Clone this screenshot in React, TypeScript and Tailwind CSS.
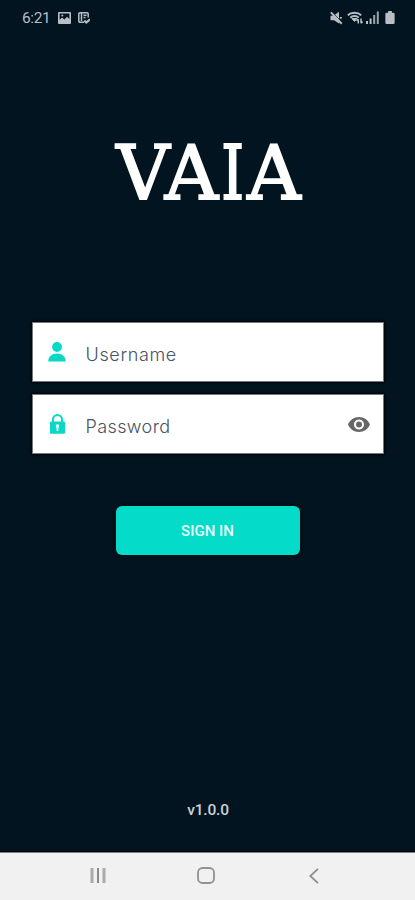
import type { ReactNode } from "react";

interface FieldProps {
    icon: ReactNode,
    label: string,
    className?: string,
    children?: ReactNode
}

function StatusBar() {
    return (
        <div className="flex h-[35px] items-center justify-between pl-[22px] pr-[20px] text-[#b9bec4]">
            {/* Time and notifications */}
            <div className="flex items-center">
                <span className="w-[28px] whitespace-nowrap font-[Roboto] text-[15.5px] leading-[18px] tracking-[-0.4px]">6:21</span>
                <svg className="ml-[8px] h-[12px] w-[13px]" viewBox="0 0 13 12" fill="currentColor">
                    <path fillRule="evenodd" d="M1 0h11a1 1 0 0 1 1 1v10a1 1 0 0 1-1 1H1a1 1 0 0 1-1-1V1a1 1 0 0 1 1-1Zm.6 1.6v6.2l2.5-2.4 2.2 2 2.7-2.7 2.4 2.4V1.6Z" />
                    <circle cx="4.3" cy="3.5" r="1" />
                </svg>
                <svg className="ml-[7px] h-[12px] w-[12px]" viewBox="0 0 12 12" fill="none" stroke="currentColor" strokeWidth="1.5">
                    <path d="M6 10.2H2A1.2 1.2 0 0 1 .8 9V2A1.2 1.2 0 0 1 2 .8h7A1.2 1.2 0 0 1 10.2 2v3.5M3.5 1v8M5.5 3.3h3M5.5 5.5h2" />
                    <path d="m6.3 8.5 2 2L12 7.3" strokeWidth="2.2" />
                </svg>
            </div>

            {/* Sound, network, battery */}
            <div className="flex items-center">
                <svg className="h-[14px] w-[13px]" viewBox="0 0 13 14" fill="currentColor">
                    <path d="M.5 4.8h3L9 .8v11.7l-5-3.3H.5Z" />
                    <path d="M2 1 13 12.4" fill="none" stroke="#01141f" strokeWidth="1" />
                    <path d="M.9 1.4 11.7 12.7" stroke="currentColor" strokeWidth="2" />
                    <path d="M9.8 6h2v1.7h-2z" />
                </svg>
                <svg className="ml-[4px] h-[14px] w-[16px]" viewBox="0 0 16 14" fill="none" stroke="currentColor">
                    <path d="M.8 4.2C4.2.9 10.8.9 14.2 4.2M3.2 6.6c2.4-2.2 6.2-2.2 8.6 0" strokeWidth="1.9" />
                    <path d="m4.8 7.5 2.7 3 2.4-3Z" fill="currentColor" />
                    <path d="M11.3 12.5V8.2m-1.7 1.6 1.7-1.7M14 7.5v4.7m1.5-1.6L14 12.2" strokeWidth="1.5" />
                </svg>
                <svg className="ml-[3px] h-[13px] w-[13px]" viewBox="0 0 13 13" fill="currentColor">
                    <path d="M0 10h2v3H0zM3.6 7.5h2V13h-2z" />
                    <path d="M7.2 4h2v9h-2zM10.8.5h2V13h-2z" opacity=".85" />
                </svg>
                <svg className="ml-[6px] h-[13px] w-[10px]" viewBox="0 0 10 14" fill="currentColor">
                    <path d="M3 0h4v1.8h1.6A1.4 1.4 0 0 1 10 3.2v9.4A1.4 1.4 0 0 1 8.6 14H1.4A1.4 1.4 0 0 1 0 12.6V3.2a1.4 1.4 0 0 1 1.4-1.4H3Z" />
                </svg>
            </div>
        </div>
    );
}

function Field({ icon, label, className, children }: FieldProps) {
    return (
        <div className="flex h-[60px] items-center border border-[#777777] bg-white pl-[15px] pr-[13px] shadow-[0_0_2px_1px_#000000]">
            <span className="flex w-[38px] shrink-0">{icon}</span>
            <span className={`mt-[5px] flex-1 font-[Inter] text-[18px] font-light leading-[24px] text-[#485365] ${className ?? ""}`}>{label}</span>
            {children}
        </div>
    );
}

export default function App() {
    return (
        <div className="flex h-[900px] w-full flex-col overflow-hidden bg-[#01141f]">
            <StatusBar />

            <main className="flex flex-1 flex-col items-center">
                <h1 className="mt-[88px] h-[100px] whitespace-nowrap pl-[2px] font-['DejaVu_Serif'] text-[74px] leading-[100px] tracking-[0px] text-white [-webkit-text-stroke:1.8px_#ffffff]">
                    VA<span className="inline-block scale-x-[0.78] [-webkit-text-stroke:2.2px_#ffffff]">I</span>A
                </h1>

                {/* Credentials */}
                <div className="mt-[99px] flex w-[352px] flex-col gap-[12px]">
                    <Field
                        label="Username"
                        className="tracking-[0.65px]"
                        icon={
                            <svg className="h-[20px] w-[18px]" viewBox="0 0 18 20" fill="#08d9c6">
                                <circle cx="9" cy="5" r="4.9" />
                                <path d="M.2 19.5C.2 14.8 4 11.6 9 11.6s8.8 3.2 8.8 7.9Z" />
                            </svg>
                        }
                    />
                    <Field
                        label="Password"
                        className="tracking-[0.4px]"
                        icon={
                            <svg className="ml-[2px] h-[20px] w-[15px]" viewBox="0 0 15 20" fill="#08d9c6">
                                <path d="M3 9V5.5a4.5 4.5 0 0 1 9 0V9" fill="none" stroke="#08d9c6" strokeWidth="2" />
                                <rect y="7.6" width="15" height="12.1" rx="1.2" />
                                <path d="M7.5 10.3a1.8 1.8 0 0 0-.9 3.3V17h1.8v-3.4a1.8 1.8 0 0 0-.9-3.3Z" fill="#ffffff" />
                            </svg>
                        }
                    >
                        <svg className="h-[15px] w-[22px]" viewBox="1 4.5 22 15" fill="#666666">
                            <path d="M12 4.5C7 4.5 2.73 7.61 1 12c1.73 4.39 6 7.5 11 7.5s9.27-3.11 11-7.5c-1.73-4.39-6-7.5-11-7.5ZM12 17c-2.76 0-5-2.24-5-5s2.24-5 5-5 5 2.24 5 5-2.24 5-5 5Zm0-8a3 3 0 1 0 0 6 3 3 0 0 0 0-6Z" />
                        </svg>
                    </Field>
                </div>

                <button className="mt-[52px] h-[49px] w-[184px] rounded-[6px] bg-[#04dbc8] pt-[1px] font-[Roboto] text-[15px] font-medium leading-[18px] text-[#e9fffc] shadow-[0_0_3px_1px_#000a10]">SIGN IN</button>

                <span className="mb-[32px] mt-auto pl-[1px] font-[Roboto] text-[15.5px] font-medium leading-[20px] tracking-[-0.2px] text-[#ccd1d4]">v1.0.0</span>
            </main>

            {/* System navigation */}
            <nav className="flex h-[48px] items-center border-t border-[#777c80] bg-[#f1f1f1] pl-[90px] shadow-[0_-1px_1px_#000000]">
                <svg className="mb-[2px] h-[15px] w-[16px]" viewBox="0 0 16 15" fill="none" strokeWidth="2">
                    <path d="M2 0v15M14 0v15" stroke="#aaaaaa" strokeWidth="3" />
                    <path d="M8 0v15" stroke="#8a8a8a" />
                </svg>
                <svg className="mb-[2px] ml-[91px] h-[17px] w-[18px]" viewBox="0 0 18 17" fill="none" stroke="#929292" strokeWidth="1.8">
                    <rect x="1" y="1" width="16" height="15" rx="4.5" />
                </svg>
                <svg className="mb-[2px] ml-[94px] h-[16px] w-[10px]" viewBox="0 0 10 16" fill="none" stroke="#8e8e8e" strokeWidth="1.8">
                    <path d="M9 .8 1.3 8 9 15.2" />
                </svg>
            </nav>
        </div>
    );
}
